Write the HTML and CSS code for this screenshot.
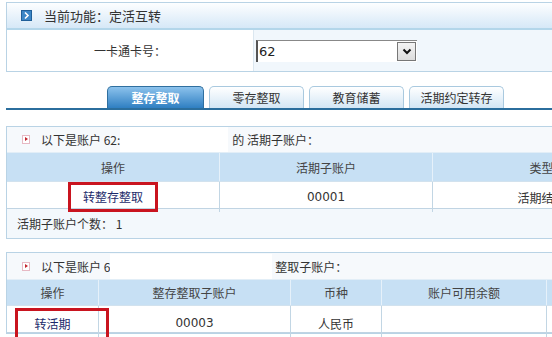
FILE: index.html
```html
<!DOCTYPE html>
<html lang="zh-CN">
<head>
    <meta charset="UTF-8">
    <title>定活互转</title>
    <link rel="stylesheet" href="styles.css">
</head>
<body>
<div class="page">
    <div class="panel func">
        <div class="func-head">
            <svg class="ico-go" width="11" height="11" viewBox="0 0 11 11">
                <rect x="0.5" y="0.5" width="10" height="10" fill="#3b86c6" stroke="#1f5f99"/>
                <path d="M4 2.5 L7 5.5 L4 8.5" fill="none" stroke="#fff" stroke-width="1.6"/>
            </svg>
            <span>当前功能：定活互转</span>
        </div>
        <div class="func-row">
            <div class="func-label">一卡通卡号：</div>
            <div class="func-field">
                <div class="select">
                    <span class="select-val">62</span>
                    <span class="select-btn">
                        <svg width="10" height="7" viewBox="0 0 10 7">
                            <path d="M1.5 1.5 L5 5 L8.5 1.5" fill="none" stroke="#111" stroke-width="2"/>
                        </svg>
                    </span>
                </div>
            </div>
        </div>
    </div>

    <ul class="tabs">
        <li class="current">整存整取</li>
        <li>零存整取</li>
        <li>教育储蓄</li>
        <li>活期约定转存</li>
    </ul>

    <div class="tab-body">
        <div class="panel acct">
            <div class="acct-title">
                <i class="ico-arr"></i>
                <span>以下是账户 62:</span><span class="redact r1"></span><span>的 活期子账户：</span>
            </div>
            <div class="grid g3 head">
                <div>操作</div>
                <div>活期子账户</div>
                <div>类型</div>
            </div>
            <div class="grid g3 row">
                <div><span class="mark">转整存整取</span></div>
                <div>00001</div>
                <div>活期结算</div>
            </div>
            <div class="acct-foot">活期子账户个数： 1</div>
        </div>

        <div class="panel acct second">
            <div class="acct-title">
                <i class="ico-arr"></i>
                <span>以下是账户 6</span><span class="redact r2"></span><span>整取子账户：</span>
            </div>
            <div class="grid g5 head">
                <div>操作</div>
                <div>整存整取子账户</div>
                <div>币种</div>
                <div>账户可用余额</div>
                <div></div>
            </div>
            <div class="grid g5 row">
                <div><span class="mark small">转活期</span></div>
                <div>00003</div>
                <div>人民币</div>
                <div></div>
                <div></div>
            </div>
        </div>
    </div>
</div>
</body>
</html>
```

FILE: styles.css
```css
* {
    margin: 0;
    padding: 0
}
html, body {
    background: #fff;
    overflow: hidden;
}
body {
    font-family: "Noto Sans CJK SC", "DejaVu Sans", sans-serif;
    font-size: 12px;
    color: #333;
    width: 552px;
    height: 337px;
}
.page {
    padding: 2px 0 0 6px;
    width: 640px;
}
.panel {
    border: 1px solid #b9d3e5;
    border-right: none;
    background: #fff;
}

/* top function box */
.func-head {
    height: 25px;
    display: flex;
    align-items: center;
    padding-left: 14px;
    font-size: 13px;
    color: #333;
    background: linear-gradient(#fdfeff, #d6e8f7);
    border-bottom: 2px solid #b3d6ea;
}
.ico-go {
    margin-right: 12px;
}
.func-row {
    height: 41px;
    display: flex;
}
.func-label {
    width: 246px;
    border-right: 1px solid #dbe7f0;
    display: flex;
    align-items: center;
    justify-content: center;
    font-size: 12px;
}
.func-field {
    flex: 1;
    background: #f1f7fc;
    display: flex;
    align-items: center;
    padding-left: 2px;
}
.select {
    width: 159px;
    height: 21px;
    background: #fff;
    border-left: 2px solid #555;
    border-top: 1px solid #888;
    display: flex;
    align-items: center;
    justify-content: space-between;
}
.select-val {
    font-family: "DejaVu Sans", sans-serif;
    font-size: 13px;
    color: #222;
    padding-left: 1px;
}
.select-btn {
    width: 17px;
    height: 17px;
    margin-right: 1px;
    border: 1px solid #777;
    background: linear-gradient(#f4f4f4, #dcdcdc);
    display: flex;
    align-items: center;
    justify-content: center;
}

/* tabs */
.tabs {
    list-style: none;
    display: flex;
    gap: 5px;
    margin-top: 14px;
    padding-left: 101px;
    height: 22px;
    border-bottom: 2px solid #2b6e9d;
}
.tabs li {
    width: 95px;
    height: 22px;
    line-height: 22px;
    text-align: center;
    font-size: 12px;
    color: #333;
    border: 1px solid #a9c9df;
    border-bottom: none;
    border-radius: 5px 5px 0 0;
    background: linear-gradient(#ffffff, #d3e6f5);
    box-sizing: border-box;
}
.tabs li.current {
    width: 97px;
    color: #fff;
    font-weight: bold;
    border-color: #2f6f9f;
    background: linear-gradient(#8cc2ec, #2f7fc2);
}

/* account panels */
.tab-body {
    padding-top: 16px;
}
.acct-title {
    height: 25px;
    display: flex;
    align-items: center;
    padding-left: 15px;
    background: #f6f9fc;
    font-size: 12px;
}
.ico-arr {
    width: 6px;
    height: 7px;
    border: 1px solid #e7b9c4;
    background: #fff;
    margin-right: 11px;
    position: relative;
}
.ico-arr::after {
    content: "";
    position: absolute;
    left: 2px;
    top: 1px;
    border-left: 3px solid #c2262e;
    border-top: 2.5px solid transparent;
    border-bottom: 2.5px solid transparent;
}
.redact {
    display: inline-block;
    height: 25px;
    background: #fff;
}
.r1 {
    width: 108px;
    margin-right: 4px;
}
.r2 {
    width: 162px;
    margin-right: 3px;
}
.grid {
    display: grid;
}
.grid > div {
    display: flex;
    align-items: center;
    justify-content: center;
    font-size: 12px;
}
.grid > div + div {
    border-left: 1px solid #c2d6e4;
}
.g3 {
    grid-template-columns: 212px 213px 218px;
}
.g5 {
    grid-template-columns: 91px 192px 91px 165px 1fr;
}
.head {
    height: 28px;
    background: #c7e0f4;
    color: #444;
    border-top: 1px solid #e2eef7;
}
.head > div + div {
    border-left: 1px solid #e6f1fa;
}
.row {
    height: 26px;
    background: #fff;
    border-top: 1px solid #d2e2ee;
    border-bottom: 1px solid #c0d4e3;
}
.row > div {
    font-family: "DejaVu Sans", "Noto Sans CJK SC", sans-serif;
    color: #333;
}
.mark {
    position: relative;
    font-family: "Noto Sans CJK SC", sans-serif;
    color: #1c2a6b;
    border: 3px solid #c9141f;
    padding: 3px 12px;
    line-height: 18px;
}
.mark.small {
    padding: 4px 35px 4px 16px;
    margin: 2px -19px 0 0;
}
.acct-foot {
    height: 29px;
    display: flex;
    align-items: center;
    padding-left: 10px;
    background: #f3f8fc;
    font-size: 12px;
}
.second {
    margin-top: 13px;
}
.second .acct-title {
    height: 26px;
}
.second .head {
    height: 25px;
}
```
